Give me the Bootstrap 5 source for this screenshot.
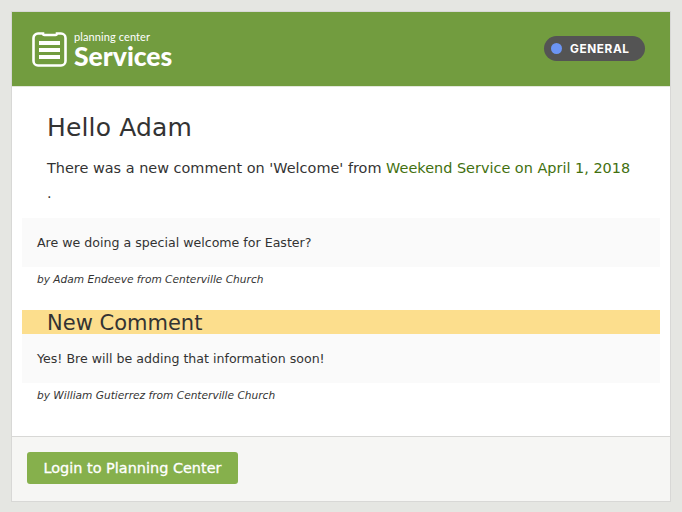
<!DOCTYPE html>
<html lang="en">
<head>
    <meta charset="UTF-8">
    <meta name="viewport" content="width=device-width, initial-scale=1.0">
    <title>New comment - Planning Center Services</title>
    <link href="https://cdn.jsdelivr.net/npm/bootstrap@5.3.0/dist/css/bootstrap.min.css" rel="stylesheet">
    <script src="https://cdn.jsdelivr.net/npm/bootstrap@5.3.0/dist/js/bootstrap.bundle.min.js"></script>
    <style>
        html, body {
            height: 100%;
        }
        body {
            background-color: #e5e6e2;
            font-family: "DejaVu Sans", sans-serif;
            color: #333;
            padding: 11px 11px 10px;
            overflow: hidden;
        }
        .mail-box {
            background: #fff;
            border: 1px solid #d8d8d6;
            height: 491px;
        }
        .mail-head {
            background: #729c3f;
            height: 75px;
            padding: 0 25px 0 20px;
            border-bottom: 1px solid #e3e8db;
        }
        .logo-small {
            font-family: Lato, sans-serif;
            font-size: 11px;
            line-height: 13px;
            letter-spacing: .1px;
        }
        .logo-big {
            font-family: Lato, sans-serif;
            font-weight: 900;
            font-size: 26.5px;
            line-height: 24px;
            margin-top: 1px;
        }
        .logo-mark {
            margin-right: 6px;
        }
        .pill {
            background: #545454;
            border-radius: 13px;
            width: 101px;
            height: 25px;
            padding-left: 7px;
            margin-bottom: 1px;
            font-family: Inter, sans-serif;
            font-weight: 700;
            font-size: 11.8px;
            letter-spacing: .6px;
        }
        .pill-label {
            padding-top: 2px;
        }
        .pill-dot {
            width: 11px;
            height: 11px;
            border-radius: 50%;
            background: #6c95f5;
            margin-right: 8px;
        }
        .mail-body {
            padding: 0 10px;
        }
        .hello {
            font-size: 25px;
            line-height: 28px;
            font-weight: 400;
            margin: 27px 0 0 25px;
            letter-spacing: .15px;
        }
        .intro {
            font-size: 14.45px;
            line-height: 25px;
            margin: 14px 25px 12px 25px;
        }
        .intro a {
            color: #42700f;
            text-decoration: none;
        }
        .quote {
            background: #fafafa;
            font-size: 12.6px;
            height: 49px;
            line-height: 49px;
            padding-left: 15px;
        }
        .byline {
            font-size: 10.6px;
            font-style: italic;
            line-height: 24px;
            padding-left: 15px;
            margin-bottom: 19px;
        }
        .new-head {
            background: #fcde8d;
            font-size: 21px;
            font-weight: 400;
            line-height: 22px;
            padding: 2px 0 0 25px;
            margin: 0;
        }
        .mail-foot {
            background: #f6f6f4;
            border-top: 1px solid #d8d8d6;
            padding: 15px 15px 17px;
        }
        .login-btn {
            background: #86b04c;
            color: #fff;
            font-size: 14.45px;
            -webkit-text-stroke: .3px #fff;
            width: 211px;
            height: 32px;
            line-height: 32px;
            padding: 0;
            border: 0;
            border-radius: 3px;
            display: block;
        }
    </style>
</head>
<body>

<div class="mail-box d-flex flex-column">
    <div class="mail-head d-flex align-items-center justify-content-between text-white">
        <div class="d-flex align-items-center">
            <svg width="36" height="35" viewBox="0 0 36 35" fill="none" class="logo-mark">
                <path d="M11 1.500H6A4.500 4.500 0 0 0 1.500 6v23A4.500 4.500 0 0 0 6 33.500h23a4.500 4.500 0 0 0 4.500-4.500V6A4.500 4.500 0 0 0 29 1.500h-4a1.500 1.500 0 0 1-1.500 1.500h-11A1.500 1.500 0 0 1 11 1.500z" stroke="#fff" stroke-width="2.6"/>
                <rect x="7" y="9" width="21" height="4" fill="#fff"/>
                <rect x="7" y="16" width="21" height="4" fill="#fff"/>
                <rect x="7" y="23" width="21" height="4" fill="#fff"/>
            </svg>
            <div>
                <div class="logo-small">planning center</div>
                <div class="logo-big">Services</div>
            </div>
        </div>
        <div class="pill d-flex align-items-center">
            <span class="pill-dot"></span><span class="pill-label">GENERAL</span>
        </div>
    </div>

    <div class="mail-body flex-grow-1">
        <h1 class="hello">Hello Adam</h1>
        <p class="intro">There was a new comment on 'Welcome' from <a href="#">Weekend Service on April 1, 2018</a> .</p>

        <div class="quote">Are we doing a special welcome for Easter?</div>
        <div class="byline">by Adam Endeeve from Centerville Church</div>

        <h2 class="new-head">New Comment</h2>
        <div class="quote">Yes! Bre will be adding that information soon!</div>
        <div class="byline">by William Gutierrez from Centerville Church</div>
    </div>

    <div class="mail-foot">
        <a href="#" class="btn login-btn">Login to Planning Center</a>
    </div>
</div>

</body>
</html>
